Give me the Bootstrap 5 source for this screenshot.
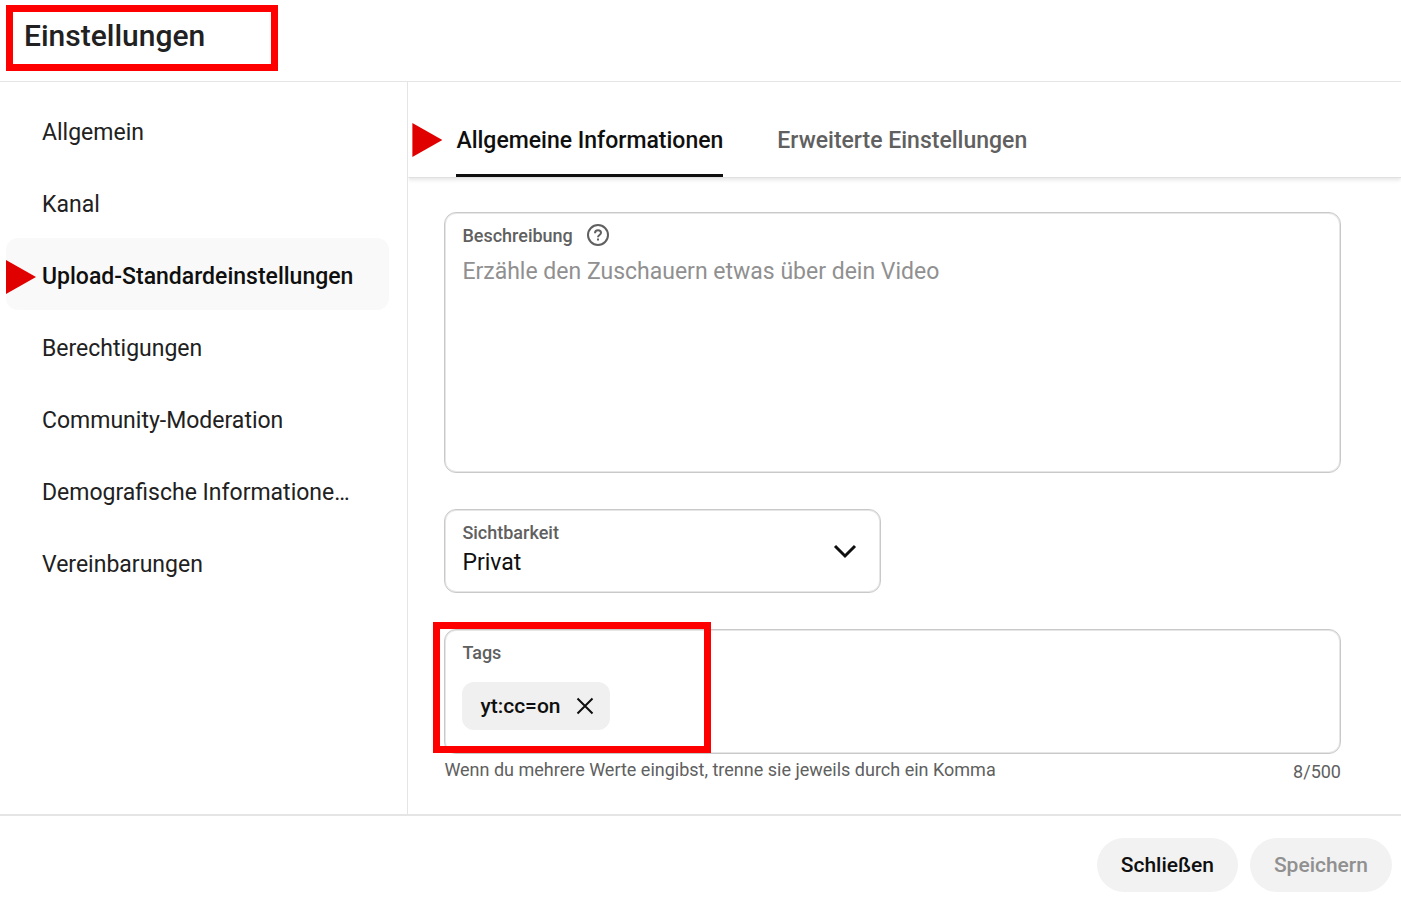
<!DOCTYPE html>
<html lang="de">
<head>
<meta charset="utf-8">
<meta name="viewport" content="width=device-width, initial-scale=1">
<title>Einstellungen</title>
<link href="https://cdn.jsdelivr.net/npm/bootstrap@5.3.0/dist/css/bootstrap.min.css" rel="stylesheet">
<style>
  body { font-family: Roboto, "Liberation Sans", sans-serif; font-size: 23px; line-height: 36px; color: #0f0f0f; background: #fff; }
  .settings-header { padding: 18px 24px 27px; border-bottom: 1px solid #e5e5e5; }
  .settings-header h1 { font-size: 30px; line-height: 36px; font-weight: 500; color: #212121; }
  .settings-nav { flex: 0 0 408px; padding: 12px 18px 12px 6px; border-right: 1px solid #e5e5e5; }
  .settings-nav .nav-link { padding: 21px 36px 15px; border-radius: 12px; color: #212121; }
  .settings-nav .nav-link.active { background: #f9f9f9; color: #0f0f0f; font-weight: 500; }
  .settings-tabs { padding: 41px 48px 0; gap: 54px; border-bottom: 1px solid #e0e0e0; box-shadow: 0 2px 4px rgba(0,0,0,.1); clip-path: inset(0 0 -8px 0); }
  .settings-tabs .nav-link { padding: 0 0 15px; border-bottom: 3px solid transparent; color: #606060; font-weight: 500; }
  .settings-tabs .nav-link.active { color: #0f0f0f; border-bottom-color: #0f0f0f; }
  .settings-form { padding: 34px 60px 28px 36px; }
  .field { border: 1px solid #c9c9c9; border-radius: 12px; box-shadow: inset 0 0 0 1px #e6e6e6; padding: 11px 17px; }
  .field label { font-size: 18px; line-height: 24px; font-weight: 500; color: #606060; }
  .field .form-control, .field .form-select { font-size: 23px; line-height: 36px; color: #0f0f0f; background-color: transparent; }
  .field .form-control:focus, .field .form-select:focus { box-shadow: none; }
  .field .form-control::placeholder { color: #909090; }
  .field textarea { height: 207px; margin-top: 6px; resize: none; }
  .field-select { width: 437px; max-width: 100%; margin: 36px 0; }
  .field-select label { top: 11px; left: 17px; pointer-events: none; }
  .field-select .form-select { height: 82px; padding: 28px 64px 4px 17px; background-image: none; }
  .field-select svg { right: 23px; top: 29px; pointer-events: none; }
  .tag-row { padding: 17px 0 12px; }
  .chip { height: 48px; padding: 0 16px 0 18px; gap: 15px; border-radius: 12px; background: #f0f0f0; font-size: 21px; font-weight: 500; }
  .hint { font-size: 18px; line-height: 24px; color: #606060; padding-top: 4px; }
  .hint .counter { padding-top: 2px; }
  .settings-footer { padding: 22px 9px 10px; gap: 12px; border-top: 2px solid #e5e5e5; }
  .settings-footer .btn { height: 54px; padding: 2px 24px 0; font-size: 21px; font-weight: 500; border: 0; background: #f2f2f2; color: #0f0f0f; }
  .settings-footer .btn:disabled { background: #f2f2f2; color: #909090; opacity: 1; }
  .marker-frame { border: 7px solid #f00; pointer-events: none; z-index: 2; }
  .title-frame { left: 6px; top: 5px; width: 272px; height: 66px; }
  .tags-frame { left: -12px; top: -8px; width: 278px; height: 131px; }
  .marker-arrow { width: 30px; height: 34px; background: #e00000; clip-path: polygon(0 0, 100% 50%, 0 100%); }
  .nav-arrow { left: 0; top: 22px; }
  .tab-arrow { left: -44px; top: 0; }
</style>
</head>
<body>
<div class="d-flex flex-column min-vh-100">
  <header class="settings-header position-relative">
    <h1 class="m-0">Einstellungen</h1>
    <span class="marker-frame title-frame position-absolute"></span>
  </header>

  <div class="d-flex flex-grow-1">
    <nav class="settings-nav nav flex-column flex-nowrap" aria-label="Einstellungen">
      <a class="nav-link text-truncate" href="#">Allgemein</a>
      <a class="nav-link text-truncate" href="#">Kanal</a>
      <a class="nav-link active position-relative text-truncate" href="#" aria-current="page">Upload-Standardeinstellungen<span class="marker-arrow nav-arrow position-absolute"></span></a>
      <a class="nav-link text-truncate" href="#">Berechtigungen</a>
      <a class="nav-link text-truncate" href="#">Community-Moderation</a>
      <a class="nav-link text-truncate" href="#">Demografische Informatione…</a>
      <a class="nav-link text-truncate" href="#">Vereinbarungen</a>
    </nav>

    <main class="flex-grow-1">
      <div class="settings-tabs nav">
        <a class="nav-link active position-relative" href="#" aria-current="true">Allgemeine Informationen<span class="marker-arrow tab-arrow position-absolute"></span></a>
        <a class="nav-link" href="#">Erweiterte Einstellungen</a>
      </div>

      <form class="settings-form">
        <div class="field">
          <div class="d-flex align-items-center">
            <label for="description">Beschreibung</label>
            <button type="button" class="btn p-0 border-0 d-flex ms-2" aria-label="Hilfe zur Beschreibung">
              <svg class="mx-1" width="24" height="24" viewBox="0 0 24 24" fill="none" stroke="#606060" stroke-width="2">
                <circle cx="13" cy="11" r="10"/>
                <path d="M10 9.200C10 7.200 11.300 6.200 13 6.200s3 1 3 2.600c0 2.200-3 2.300-3 4.500"/>
                <path d="M13 14.500v2"/>
              </svg>
            </button>
          </div>
          <textarea id="description" class="form-control border-0 rounded-0 p-0" placeholder="Erzähle den Zuschauern etwas über dein Video"></textarea>
        </div>

        <div class="field field-select position-relative p-0">
          <label class="position-absolute" for="visibility">Sichtbarkeit</label>
          <select id="visibility" class="form-select border-0">
            <option>Privat</option>
            <option>Nicht gelistet</option>
            <option>Öffentlich</option>
          </select>
          <svg class="position-absolute" width="24" height="24" viewBox="0 0 24 24" fill="none" stroke="#0f0f0f" stroke-width="3"><path d="M2 7l10 10L22 7"/></svg>
        </div>

        <div class="field position-relative">
          <label class="d-block" for="tags">Tags</label>
          <div class="tag-row d-flex align-items-center gap-3">
            <span class="chip d-inline-flex align-items-center flex-shrink-0">yt:cc=on
              <button type="button" class="btn p-0 border-0 d-flex" aria-label="Tag entfernen">
                <svg width="18" height="18" viewBox="0 0 18 18" fill="none" stroke="#0f0f0f" stroke-width="2"><path d="M1.500 1.500l15 15M16.500 1.500l-15 15"/></svg>
              </button>
            </span>
            <input id="tags" type="text" class="form-control border-0 p-0">
          </div>
          <span class="marker-frame tags-frame position-absolute"></span>
        </div>
        <div class="hint d-flex justify-content-between gap-3">
          <span>Wenn du mehrere Werte eingibst, trenne sie jeweils durch ein Komma</span>
          <span class="counter">8/500</span>
        </div>
      </form>
    </main>
  </div>

  <footer class="settings-footer d-flex justify-content-end">
    <button type="button" class="btn rounded-pill">Schließen</button>
    <button type="button" class="btn rounded-pill" disabled>Speichern</button>
  </footer>
</div>
<script src="https://cdn.jsdelivr.net/npm/bootstrap@5.3.0/dist/js/bootstrap.bundle.min.js"></script>
</body>
</html>
